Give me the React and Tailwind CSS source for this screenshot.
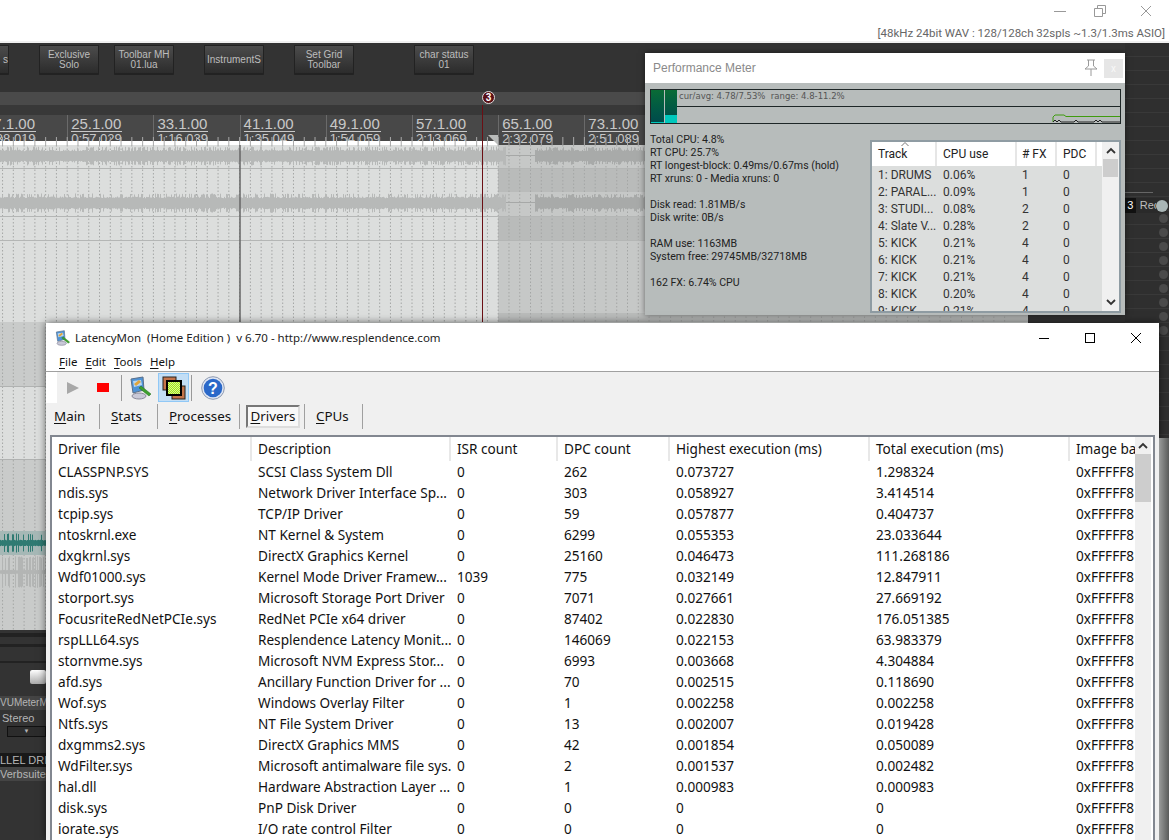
import React from "react";

const drivers = [
  ["CLASSPNP.SYS", "SCSI Class System Dll", "0", "262", "0.073727", "1.298324"],
  ["ndis.sys", "Network Driver Interface Sp...", "0", "303", "0.058927", "3.414514"],
  ["tcpip.sys", "TCP/IP Driver", "0", "59", "0.057877", "0.404737"],
  ["ntoskrnl.exe", "NT Kernel & System", "0", "6299", "0.055353", "23.033644"],
  ["dxgkrnl.sys", "DirectX Graphics Kernel", "0", "25160", "0.046473", "111.268186"],
  ["Wdf01000.sys", "Kernel Mode Driver Framew...", "1039", "775", "0.032149", "12.847911"],
  ["storport.sys", "Microsoft Storage Port Driver", "0", "7071", "0.027661", "27.669192"],
  ["FocusriteRedNetPCIe.sys", "RedNet PCIe x64 driver", "0", "87402", "0.022830", "176.051385"],
  ["rspLLL64.sys", "Resplendence Latency Monit...", "0", "146069", "0.022153", "63.983379"],
  ["stornvme.sys", "Microsoft NVM Express Stor...", "0", "6993", "0.003668", "4.304884"],
  ["afd.sys", "Ancillary Function Driver for ...", "0", "70", "0.002515", "0.118690"],
  ["Wof.sys", "Windows Overlay Filter", "0", "1", "0.002258", "0.002258"],
  ["Ntfs.sys", "NT File System Driver", "0", "13", "0.002007", "0.019428"],
  ["dxgmms2.sys", "DirectX Graphics MMS", "0", "42", "0.001854", "0.050089"],
  ["WdFilter.sys", "Microsoft antimalware file sys...", "0", "2", "0.001537", "0.002482"],
  ["hal.dll", "Hardware Abstraction Layer ...", "0", "1", "0.000983", "0.000983"],
  ["disk.sys", "PnP Disk Driver", "0", "0", "0", "0"],
  ["iorate.sys", "I/O rate control Filter", "0", "0", "0", "0"],
];

const tracks = [
  ["1: DRUMS", "0.06%", "1", "0"],
  ["2: PARAL...", "0.09%", "1", "0"],
  ["3: STUDI...", "0.08%", "2", "0"],
  ["4: Slate V...", "0.28%", "2", "0"],
  ["5: KICK", "0.21%", "4", "0"],
  ["6: KICK", "0.21%", "4", "0"],
  ["7: KICK", "0.21%", "4", "0"],
  ["8: KICK", "0.20%", "4", "0"],
  ["9: KICK", "0.21%", "4", "0"],
];

const bars = [
  ["17.1.00", "0:38.019"],
  ["25.1.00", "0:57.029"],
  ["33.1.00", "1:16.039"],
  ["41.1.00", "1:35.049"],
  ["49.1.00", "1:54.059"],
  ["57.1.00", "2:13.069"],
  ["65.1.00", "2:32.079"],
  ["73.1.00", "2:51.089"],
];

const meterStats = [
  ["Total CPU: 4.8%", "RT CPU: 25.7%", "RT longest-block: 0.49ms/0.67ms (hold)", "RT xruns: 0 - Media xruns: 0"],
  ["Disk read: 1.81MB/s", "Disk write: 0B/s"],
  ["RAM use: 1163MB", "System free: 29745MB/32718MB"],
  ["162 FX: 6.74% CPU"],
];

// same numbers every render
const noise = (i) => {
  const v = Math.sin(i * 12.9898) * 43758.5453;
  return v - Math.floor(v);
};

const wavePath = (from, to, mid, body, spike, seed) => {
  let d = "";
  for (let x = from; x < to; x += 1) {
    const n = noise(x + seed);
    const a = n > 0.7 ? spike * (0.55 + n * 0.45) : body * (0.8 + n * 0.4);
    d += `M${x + 0.5} ${(mid - a).toFixed(1)}V${(mid + a).toFixed(1)}`;
  }
  return d;
};

const gridX = Array.from({ length: 96 }, (_, i) => -19 + i * 10.775);

const Arrange = () => (
  <svg width="1028" height="485" className="block">
    <rect width="1028" height="485" fill="#dcdedd" />
    <rect y="177" width="46" height="64" fill="#c9cbca" />
    <rect y="314" width="46" height="171" fill="#c9cbca" />
    <rect x="498" width="530" height="177" fill="#c6c8c7" />
    <rect x="498" y="23" width="530" height="24" fill="#b9bbba" />
    <rect x="498" y="72" width="530" height="23" fill="#b9bbba" />
    <rect x="498" y="168" width="530" height="9" fill="#b9bbba" />
    {gridX.map((x) => (
      <line key={x} x1={x} x2={x} y1="0" y2="485" stroke="#a4a6a5" strokeDasharray="1.5 2" strokeWidth="1" />
    ))}
    {[23, 71, 95].map((y) => (
      <line key={y} x1="0" x2="1028" y1={y + 0.5} y2={y + 0.5} stroke="#b4b6b5" />
    ))}
    <line x1="0" x2="46" y1="241.5" y2="241.5" stroke="#b0b2b1" />
    <line x1="0" x2="46" y1="314.5" y2="314.5" stroke="#b0b2b1" />
    <path d={wavePath(0, 506, 11, 6, 9.5, 3)} stroke="#b7b9b8" />
    <path d={wavePath(0, 506, 58, 6, 9.5, 900)} stroke="#b7b9b8" />
    <path d={wavePath(535, 660, 11, 6, 9, 40)} stroke="#a8aaa9" />
    <path d={wavePath(535, 660, 58, 6, 9, 60)} stroke="#a8aaa9" />
    <path d="M506 10.5H535M506 57.5H535" stroke="#a6a8a7" />
    <rect y="386" width="46" height="24" fill="#a6b8b6" />
    <path d={wavePath(0, 46, 398, 3, 9.5, 200)} stroke="#2f7a72" />
    <path d={wavePath(0, 46, 427, 2, 16, 300)} stroke="#b3b5b4" />
    <line x1="240" x2="240" y1="0" y2="177" stroke="#666" strokeWidth="1.5" />
  </svg>
);

const ToolButton = ({ lines, className = "" }) => (
  <div
    className={`flex h-[30px] w-[60px] shrink-0 flex-col items-center justify-center rounded-[1px] border border-[#222] border-b-2 bg-gradient-to-b from-[#4c4c4c] to-[#2c2c2c] text-[10px] leading-[10px] text-[#bdbdbd] ${className}`}
  >
    {lines.map((l) => (
      <span key={l}>{l}</span>
    ))}
  </div>
);

const Ruler = () => (
  <div className="relative h-[30px] overflow-hidden bg-[#484848]">
    <div className="ml-[-19px] flex h-full">
      {bars.map(([bar, time]) => (
        <div key={bar} className="h-full w-[86.2px] shrink-0 border-l border-[#6a6a6a] pl-[3px] pt-[2px] font-['Liberation_Sans',sans-serif] text-[#c8c8c8]">
          <div className="w-[51px] border-b border-[#c8c8c8] text-[15px] leading-[14px]">{bar}</div>
          <div className="text-[13px] leading-[13px]">{time}</div>
        </div>
      ))}
    </div>
    <svg width="1028" height="30" className="absolute left-0 top-0">
      <rect y="26" width="498" height="4" fill="#ffffff" />
      {gridX.map((x) => (
        <line key={x} x1={x} x2={x} y1="22" y2="30" stroke="#a8a8a8" />
      ))}
      <path d="M488 20H498V30Z" fill="#b9bbba" />
    </svg>
  </div>
);

const MixerStrip = () => (
  <div className="flex h-[210px] w-[46px] flex-col overflow-hidden bg-[#333] font-['Liberation_Sans',sans-serif] text-[#b5b5b5]">
    <div className="mt-[3px] h-[4px] bg-[#222]" />
    <div className="mt-[7px] h-[3px] bg-[#222]" />
    <div className="mt-[14px] h-[2px] bg-[#222]" />
    <div className="mt-[7px] flex h-[14px] justify-end">
      <div className="w-[16px] rounded-[2px] bg-gradient-to-b from-white to-[#aaa]" />
    </div>
    <div className="mt-[12px] whitespace-nowrap bg-[#444] text-[10px] leading-[14px]">VUMeterMH</div>
    <div className="whitespace-nowrap pl-[2px] text-[11px] leading-[16px]">Stereo</div>
    <div className="ml-[7px] flex h-[11px] items-center justify-center border border-[#111] bg-[#2c2c2c] text-[6px]">▼</div>
    <div className="mt-[16px] flex h-[14px] items-center justify-between whitespace-nowrap bg-[#181818] text-[11px]">
      <span>LLEL DRI</span>
      <span className="h-[10px] w-[5px] shrink-0 rounded-l-full bg-[#999]" />
    </div>
    <div className="flex h-[14px] items-center justify-between whitespace-nowrap bg-[#444] text-[11px]">
      <span>Verbsuite</span>
      <span className="h-[10px] w-[5px] shrink-0 rounded-l-full bg-[#999]" />
    </div>
  </div>
);

const Chevron = ({ up }) => (
  <svg width="10" height="7" viewBox="0 0 10 7">
    <path d={up ? "M1 6L5 2L9 6" : "M1 1L5 5L9 1"} fill="none" stroke="#333" strokeWidth="1.8" />
  </svg>
);

const PerformanceMeter = () => (
  <div className="absolute left-[645px] top-[53px] h-[262px] w-[480px] overflow-hidden bg-[#b7bcbb] font-['Roboto',sans-serif] shadow-[0_0_6px_rgba(0,0,0,0.5)]">
    <div className="flex h-[30px] items-center bg-white pl-[8px] pr-[2px]">
      <span className="font-['Liberation_Sans',sans-serif] text-[12px] text-[#8a8a8a]">Performance Meter</span>
      <svg width="16" height="18" viewBox="0 0 16 18" className="ml-auto mr-[5px]">
        <path d="M4 1H12M5.5 1V7L2 10H14L10.5 7V1M8 10V17" fill="none" stroke="#9a9a9a" />
      </svg>
      <div className="flex h-[19px] w-[19px] items-center justify-center bg-[#e6e6e6] text-[10px] text-[#f8f8f8]">x</div>
    </div>
    <div className="relative mx-[5px] mt-[6px] h-[35px] w-[471px] border border-[#1d2626]">
      <div className="absolute left-0 top-0 flex h-full gap-[1px]">
        <div className="flex h-full w-[13px] flex-col justify-end bg-gradient-to-b from-[#0a6b35] to-[#004a4c]">
          <div className="h-[1px] bg-[#00c8bc]" />
        </div>
        <div className="flex h-full w-[12px] flex-col justify-end bg-gradient-to-b from-[#0a6b35] to-[#004a4c]">
          <div className="h-[8px] bg-[#00c8bc]" />
        </div>
      </div>
      <div className="absolute left-0 right-0 top-[16px] ml-[26px] h-[1px] bg-[#1d2626]" />
      <div className="absolute left-[28px] top-0 whitespace-pre font-['DejaVu_Sans',sans-serif] text-[8.5px] leading-[12px] text-[#555]">
        cur/avg: 4.78/7.53%  range: 4.8-11.2%
      </div>
      <svg width="68" height="16" className="absolute bottom-0 right-0">
        <path d="M1 15V10L3 8H12L14 9.5H68" fill="none" stroke="#3f9b0e" />
        <path d="M1 15L3 13L5 15L7 13L9 15H22L24 13L26 15H42L44 13L46 15L48 13L50 15H68" fill="none" stroke="#222" />
      </svg>
    </div>
    <div className="relative">
      <div className="ml-[5px] mt-[9px] flex flex-col gap-[13px] text-[10.6px] leading-[13px] text-[#222]">
        {meterStats.map((group) => (
          <div key={group[0]}>
            {group.map((line) => (
              <div key={line} className="whitespace-nowrap">{line}</div>
            ))}
          </div>
        ))}
      </div>
      <div className="absolute left-[225px] top-[7px] flex h-[173px] w-[251px] border-2 border-[#8f9ca3] bg-[#dcdedd]">
        <div className="w-[232px] overflow-hidden">
          <div className="relative flex h-[24px] items-center bg-white text-[12px] text-[#222]">
            <div className="flex h-full w-[65px] shrink-0 items-center border-r-2 border-[#e6e6e6] pl-[6px]">Track</div>
            <div className="flex h-full w-[80px] shrink-0 items-center border-r-2 border-[#e6e6e6] pl-[6px]">CPU use</div>
            <div className="flex h-full w-[40px] shrink-0 items-center border-r-2 border-[#e6e6e6] pl-[5px]"># FX</div>
            <div className="flex h-full w-[40px] shrink-0 items-center border-r-2 border-[#e6e6e6] pl-[6px]">PDC</div>
            <svg width="8" height="4" className="absolute left-[29px] top-0">
              <path d="M0.5 4L4 0.5L7.5 4" fill="none" stroke="#777" />
            </svg>
          </div>
          {tracks.map((t) => (
            <div key={t[0]} className="flex h-[17px] items-center pt-[1px] text-[12px] text-[#333]">
              <div className="w-[65px] shrink-0 overflow-hidden whitespace-nowrap pl-[6px]">{t[0]}</div>
              <div className="w-[80px] shrink-0 pl-[6px]">{t[1]}</div>
              <div className="w-[40px] shrink-0 pl-[5px]">{t[2]}</div>
              <div className="w-[40px] shrink-0 pl-[6px]">{t[3]}</div>
            </div>
          ))}
        </div>
        <div className="flex w-[17px] flex-col items-center bg-[#f0f0f0]">
          <div className="flex h-[17px] items-center"><Chevron up /></div>
          <div className="h-[18px] w-[15px] bg-[#cdcdcd]" />
          <div className="mt-auto flex h-[17px] items-center"><Chevron /></div>
        </div>
      </div>
    </div>
  </div>
);

const ComputerIcon = ({ size = 24 }) => (
  <svg width={size} height={size} viewBox="0 0 24 24">
    <path d="M2 3L14 1L15 14L4 17Z" fill="#4f93d6" stroke="#5a6f8a" />
    <path d="M4 5L12 4L13 9L5 11Z" fill="#b9d7f2" />
    <path d="M5 8L10 4L12 6L7 10Z" fill="#e0a53c" />
    <ellipse cx="10" cy="20" rx="7" ry="3" fill="#c9c9d8" stroke="#8a8a9a" />
    <path d="M12 10L22 18L20 20L10 12Z" fill="#3ea02e" stroke="#1f6a1a" strokeWidth="0.5" />
  </svg>
);

const WindowsIcon = () => (
  <svg width="24" height="24" viewBox="0 0 24 24">
    <defs>
      <pattern id="lime-check" width="2" height="2" patternUnits="userSpaceOnUse">
        <rect width="2" height="2" fill="#9fe61a" />
        <rect width="1" height="1" fill="#d8f590" />
        <rect x="1" y="1" width="1" height="1" fill="#d8f590" />
      </pattern>
    </defs>
    <rect x="1" y="1" width="13" height="13" fill="#c4744a" stroke="#222" strokeWidth="1" />
    <rect x="10" y="10" width="13" height="13" fill="#c4744a" stroke="#222" strokeWidth="1" />
    <rect x="5" y="5" width="14" height="14" fill="url(#lime-check)" stroke="#000" strokeWidth="2" />
  </svg>
);

const HelpIcon = () => (
  <svg width="24" height="24" viewBox="0 0 24 24">
    <circle cx="12" cy="12" r="11.3" fill="#dfe6f3" stroke="#8e9ab0" />
    <circle cx="12" cy="12" r="9.3" fill="#2a68c9" />
    <text x="12" y="17.5" textAnchor="middle" fontSize="16" fontWeight="700" fontFamily="Liberation Sans, sans-serif" fill="#fff">?</text>
  </svg>
);

const Underlined = ({ first, rest }) => (
  <span>
    <span className="underline underline-offset-2">{first}</span>
    {rest}
  </span>
);

const menus = [["F", "ile"], ["E", "dit"], ["T", "ools"], ["H", "elp"]];

const tabs = [
  ["M", "ain", "w-[54px]"],
  ["S", "tats", "w-[58px]"],
  ["P", "rocesses", "w-[82px]"],
  ["D", "rivers", "w-[65px]"],
  ["C", "PUs", "w-[58px]"],
];

const columns = [
  ["Driver file", "w-[200px]"],
  ["Description", "w-[199px]"],
  ["ISR count", "w-[107px]"],
  ["DPC count", "w-[112px]"],
  ["Highest execution (ms)", "w-[200px]"],
  ["Total execution (ms)", "w-[200px]"],
  ["Image base", "w-[80px]"],
];

const LatencyMon = () => (
  <div className="absolute left-[46px] top-[323px] flex h-[517px] w-[1113px] flex-col bg-[#f0f0f0] font-['Noto_Sans',sans-serif] text-[#111] shadow-[0_0_8px_rgba(0,0,0,0.6)]">
    <div className="flex h-[29px] shrink-0 items-center bg-white pl-[9px] pr-[17px]">
      <ComputerIcon size={16} />
      <span className="ml-[4px] whitespace-pre text-[11.5px] text-[#222]">LatencyMon  (Home Edition )  v 6.70 - http://www.resplendence.com</span>
      <svg width="12" height="12" className="ml-auto">
        <path d="M1 6.5H11" stroke="#000" />
      </svg>
      <svg width="12" height="12" className="ml-[34px]">
        <rect x="1.5" y="1.5" width="9" height="9" fill="none" stroke="#000" />
      </svg>
      <svg width="12" height="12" className="ml-[34px]">
        <path d="M1 1L11 11M11 1L1 11" stroke="#000" />
      </svg>
    </div>
    <div className="flex h-[20px] shrink-0 items-center gap-[8px] border-b border-[#a0a0a0] bg-white pl-[13px] text-[11.5px]">
      {menus.map(([a, b]) => (
        <Underlined key={a} first={a} rest={b} />
      ))}
    </div>
    <div className="flex h-[31px] shrink-0 items-center">
      <div className="mr-[9px] h-full w-[11px] bg-white" />
      <svg width="14" height="14" viewBox="0 0 14 14">
        <path d="M1 1L13 7L1 13Z" fill="#a8a8a8" />
      </svg>
      <div className="ml-[17px] h-[9px] w-[12px] bg-[#f00]" />
      <div className="ml-[12px] h-[26px] w-[1px] bg-[#999]" />
      <div className="ml-[7px]"><ComputerIcon /></div>
      <div className="ml-[5px] flex h-[29px] w-[31px] items-center justify-center border border-[#90c8f6] bg-[#c3def5]">
        <WindowsIcon />
      </div>
      <div className="ml-[2px] h-[26px] w-[1px] bg-[#999]" />
      <div className="ml-[9px]"><HelpIcon /></div>
    </div>
    <div className="flex h-[26px] shrink-0 items-center text-[13.4px]">
      {tabs.map(([a, b, w]) => (
        <div key={a} className={`flex h-[25px] items-center border-r border-[#a0a0a0] ${w} ${a === "M" ? "pl-[8px]" : "pl-[11px]"}`}>
          {a === "D" ? (
            <div className="ml-[-5px] flex h-[23px] w-[54px] items-center justify-center border-2 border-t-[#777] border-l-[#777] border-r-[#ddd] border-b-[#ddd] bg-[#f8f8f8]">
              <Underlined first={a} rest={b} />
            </div>
          ) : (
            <Underlined first={a} rest={b} />
          )}
        </div>
      ))}
    </div>
    <div className="mx-[4px] mt-[6px] flex min-h-0 flex-1 border-2 border-b-0 border-[#828790] bg-white pr-[2px]">
      <div className="min-w-0 flex-1 overflow-hidden text-[13.6px]">
        <div className="flex h-[24px] items-center">
          {columns.map(([label, w]) => (
            <div key={label} className={`flex h-full shrink-0 items-center overflow-hidden whitespace-nowrap border-r-2 border-[#e8e8e8] pl-[6px] ${w}`}>
              {label}
            </div>
          ))}
        </div>
        {drivers.map((d) => (
          <div key={d[0]} className="flex h-[21px] items-center whitespace-nowrap pt-[2px]">
            <div className="w-[200px] shrink-0 pl-[6px]">{d[0]}</div>
            <div className="w-[199px] shrink-0 overflow-hidden pl-[6px]">{d[1]}</div>
            <div className="w-[107px] shrink-0 pl-[6px]">{d[2]}</div>
            <div className="w-[112px] shrink-0 pl-[6px]">{d[3]}</div>
            <div className="w-[200px] shrink-0 pl-[6px]">{d[4]}</div>
            <div className="w-[200px] shrink-0 pl-[6px]">{d[5]}</div>
            <div className="shrink-0 pl-[6px]">0xFFFFF8</div>
          </div>
        ))}
      </div>
      <div className="flex w-[16px] shrink-0 flex-col items-center bg-[#f0f0f0]">
        <div className="flex h-[17px] items-center"><Chevron up /></div>
        <div className="h-[48px] w-full bg-[#cdcdcd]" />
      </div>
    </div>
  </div>
);

const RightStrip = () => (
  <div className="absolute left-[1125px] top-[43px] flex h-[395px] w-[44px] flex-col bg-[repeating-linear-gradient(180deg,#2f2f2f_0,#2f2f2f_13px,#393939_13px,#393939_14px)] font-['Liberation_Sans',sans-serif] text-[11px] text-[#bdbdbd]">
    <div className="mt-[149px] h-[1px] w-[28px] bg-[#666]" />
    <div className="mt-[5px] flex h-[15px] items-center rounded-r-full bg-[#2a2a2a]">
      <span className="h-full w-[13px] bg-[#111] text-center leading-[15px] text-white">3</span>
      <span className="ml-[4px] overflow-hidden whitespace-nowrap">Rec</span>
      <span className="ml-auto mr-[1px] h-[12px] w-[12px] shrink-0 rounded-full bg-[#a9b6b6]" />
    </div>
    <div className="mt-[1px] flex flex-col items-end gap-[5px] pr-[1px]">
      {Array.from({ length: 9 }, (_, i) => (
        <span key={i} className="h-[9px] w-[9px] rounded-full bg-[#4a4a4a]" />
      ))}
    </div>
  </div>
);

export default function App() {
  return (
    <div className="relative flex h-[840px] w-[1169px] flex-col overflow-hidden bg-white">
      <header className="h-[43px] shrink-0 border-b-2 border-[#f0f0f0] font-['Roboto',sans-serif]">
        <div className="flex h-[21px] items-center justify-end pr-[17px]">
          <svg width="12" height="12"><path d="M0 6.5H12" stroke="#999" /></svg>
          <svg width="12" height="12" className="ml-[28px]">
            <path d="M3.5 3V0.5H11.5V8.5H9M0.5 3.5H8.5V11.5H0.5Z" fill="none" stroke="#999" />
          </svg>
          <svg width="12" height="12" className="ml-[34px]">
            <path d="M1 1L11 11M11 1L1 11" stroke="#999" />
          </svg>
        </div>
        <div className="whitespace-nowrap pr-[4px] text-right text-[11.5px] leading-[24px] text-[#666]">
          [48kHz 24bit WAV : 128/128ch 32spls ~1.3/1.3ms ASIO]
        </div>
      </header>

      <main className="relative min-h-0 flex-1 bg-[#333]">
        <div className="flex h-[49px] items-start pt-[2px] font-['Liberation_Sans',sans-serif]">
          <ToolButton lines={["s"]} className="ml-[-51px] items-end" />
          <ToolButton lines={["Exclusive", "Solo"]} className="ml-[30px]" />
          <ToolButton lines={["Toolbar MH", "01.lua"]} className="ml-[15px]" />
          <ToolButton lines={["InstrumentS"]} className="ml-[30px]" />
          <ToolButton lines={["Set Grid", "Toolbar"]} className="ml-[30px]" />
          <ToolButton lines={["char status", "01"]} className="ml-[60px]" />
        </div>
        <div className="h-[13px] bg-[#4a4a4a]" />
        <div className="h-[10px] bg-[#383838]" />
        <Ruler />
        <Arrange />
        <MixerStrip />
        <div className="absolute left-[482px] top-[62px] h-[217px] w-[1px] bg-[#6b0f14]" />
        <div className="absolute left-[482px] top-[48px] flex h-[13px] w-[13px] items-center justify-center rounded-full border border-[#ddd] bg-[#5a0f14] font-['Liberation_Sans',sans-serif] text-[10px] font-bold text-white">
          3
        </div>
      </main>

      <RightStrip />
      <PerformanceMeter />
      <LatencyMon />
      <div className="absolute left-[1159px] top-[438px] h-[402px] w-[10px] bg-gradient-to-r from-[#9a9c9b] to-[#5a5c5b]" />
    </div>
  );
}
